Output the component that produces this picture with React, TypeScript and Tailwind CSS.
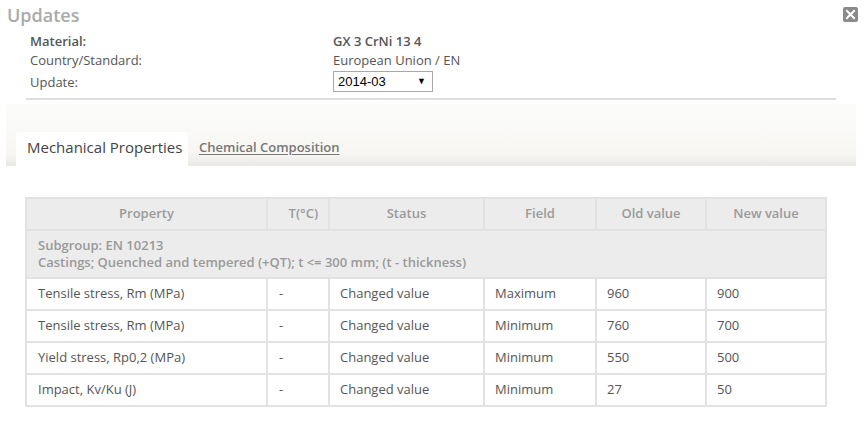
import React from "react";

const rows = [
  ["Tensile stress, Rm (MPa)", "-", "Changed value", "Maximum", "960", "900"],
  ["Tensile stress, Rm (MPa)", "-", "Changed value", "Minimum", "760", "700"],
  ["Yield stress, Rp0,2 (MPa)", "-", "Changed value", "Minimum", "550", "500"],
  ["Impact, Kv/Ku (J)", "-", "Changed value", "Minimum", "27", "50"],
];

export default function App() {
  return (
    <div
      className="relative w-[865px] h-[425px] bg-white overflow-hidden text-[#555]"
      style={{ fontFamily: '"Open Sans", "DejaVu Sans", sans-serif' }}
    >
      <div className="pl-[7px] pt-[3px] text-[18px] leading-[24px] font-semibold text-[#aaaaaa]">Updates</div>
      <div className="absolute left-[843px] top-[7px] w-[15px] h-[15px] rounded-[2px] bg-[#8a8a8a] flex items-center justify-center">
        <svg width="11" height="11" viewBox="0 0 11 11">
          <path d="M2 2 L9 9 M9 2 L2 9" stroke="white" strokeWidth="2" strokeLinecap="square" />
        </svg>
      </div>

      <div className="ml-[30px] mt-[5px] grid grid-cols-[303px_auto] text-[13px]">
        <div className="leading-[19px] font-semibold">Material:</div>
        <div className="leading-[19px] font-semibold">GX 3 CrNi 13 4</div>
        <div className="leading-[19px]">Country/Standard:</div>
        <div className="leading-[19px]">European Union / EN</div>
        <div className="leading-[23px] pt-[1px]">Update:</div>
        <div className="pt-[1px]">
          <div
            className="w-[100px] h-[21px] border border-[#a9a9a9] bg-white flex items-center justify-between pl-[4px] pr-[6px] text-[13px] text-[#000]"
            style={{ fontFamily: '"Liberation Sans", Arial, sans-serif' }}
          >
            <span>2014-03</span>
            <span className="text-[9px]">▼</span>
          </div>
        </div>
      </div>

      <div className="ml-[26px] mt-[4px] w-[810px] h-[2px] bg-[#dedede]" />

      <div className="ml-[6px] mt-[4px] w-[850px] h-[62px] pt-[28px] pl-[10px] flex items-end bg-gradient-to-b from-[#fcfcfb] via-[#f7f6f3] via-80% to-[#e9e8e3]">
        <div className="h-[34px] w-[172px] bg-white rounded-t-[3px] pl-[11px] text-[15px] leading-[30px] text-[#444]">
          Mechanical Properties
        </div>
        <div className="h-[34px] pl-[11px] text-[13px] leading-[30px] font-semibold text-[#777] underline underline-offset-2">
          Chemical Composition
        </div>
      </div>

      <table className="ml-[25px] mt-[31px] border-collapse table-fixed w-[800px] text-[13px]">
        <colgroup>
          <col className="w-[241px]" />
          <col className="w-[62px]" />
          <col className="w-[155px]" />
          <col className="w-[112px]" />
          <col className="w-[110px]" />
          <col className="w-[120px]" />
        </colgroup>
        <thead>
          <tr className="h-[32px] bg-[#ececec] text-[#9a9a9a] font-semibold">
            <th className="border-2 border-[#e2e2e2] font-semibold text-center">Property</th>
            <th className="border-2 border-[#e2e2e2] font-semibold text-right pr-[10px]">T(°C)</th>
            <th className="border-2 border-[#e2e2e2] font-semibold text-center">Status</th>
            <th className="border-2 border-[#e2e2e2] font-semibold text-center">Field</th>
            <th className="border-2 border-[#e2e2e2] font-semibold text-center">Old value</th>
            <th className="border-2 border-[#e2e2e2] font-semibold text-center">New value</th>
          </tr>
        </thead>
        <tbody>
          <tr className="h-[48px] bg-[#ececec]">
            <td colSpan={6} className="border-2 border-[#e2e2e2] pl-[11px] text-[#999] font-semibold leading-[17px]">
              <div>Subgroup: EN 10213</div>
              <div>Castings; Quenched and tempered (+QT); t &lt;= 300 mm; (t - thickness)</div>
            </td>
          </tr>
          {rows.map((r, i) => (
            <tr key={i} className="h-[32px] bg-white">
              <td className="border-2 border-[#e2e2e2] pl-[11px]">{r[0]}</td>
              <td className="border-2 border-[#e2e2e2] pl-[11px]">{r[1]}</td>
              <td className="border-2 border-[#e2e2e2] pl-[10px]">{r[2]}</td>
              <td className="border-2 border-[#e2e2e2] pl-[10px]">{r[3]}</td>
              <td className="border-2 border-[#e2e2e2] pl-[10px]">{r[4]}</td>
              <td className="border-2 border-[#e2e2e2] pl-[10px]">{r[5]}</td>
            </tr>
          ))}
        </tbody>
      </table>
    </div>
  );
}
